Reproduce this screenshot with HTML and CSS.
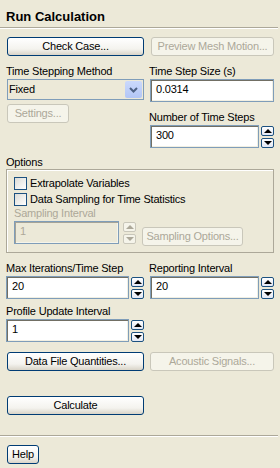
FILE: index.html
```html
<!DOCTYPE html>
<html lang="en">
<head>
  <meta charset="UTF-8" />
  <title>Run Calculation</title>
  <link rel="stylesheet" href="styles.css">
</head>
<body>
<div class="panel">

  <div class="title">Run Calculation</div>

  <div class="pair row-top">
    <div class="col-left"><button class="btn wide">Check Case...</button></div>
    <div class="col-right"><button class="btn wide" disabled>Preview Mesh Motion...</button></div>
  </div>

  <!-- time stepping -->
  <div class="pair row-time">
    <div class="col-left">
      <div class="label">Time Stepping Method</div>
      <div class="combo">
        <span class="combo-text">Fixed</span>
        <span class="combo-arrow">
          <svg width="9" height="6" viewBox="0 0 9 6"><polyline points="1,1 4.5,4.5 8,1" fill="none" stroke="#4d6185" stroke-width="2"/></svg>
        </span>
      </div>
      <button class="btn settings" disabled>Settings...</button>
    </div>
    <div class="col-right">
      <div class="label">Time Step Size (s)</div>
      <div class="entry">0.0314</div>
      <div class="label label-next">Number of Time Steps</div>
      <div class="spin-field">
        <div class="entry">300</div>
        <div class="spinner"><span class="spin-btn up"></span><span class="spin-btn down"></span></div>
      </div>
    </div>
  </div>

  <!-- options -->
  <div class="label options-label">Options</div>
  <div class="group">
    <div class="check-row"><span class="checkbox"></span>Extrapolate Variables</div>
    <div class="check-row"><span class="checkbox"></span>Data Sampling for Time Statistics</div>
    <div class="sampling">
      <div class="sampling-field">
        <div class="label off">Sampling Interval</div>
        <div class="spin-field">
          <div class="entry off">1</div>
          <div class="spinner off"><span class="spin-btn up"></span><span class="spin-btn down"></span></div>
        </div>
      </div>
      <button class="btn sampling-btn" disabled>Sampling Options...</button>
    </div>
  </div>

  <div class="pair row-iter">
    <div class="col-left">
      <div class="label">Max Iterations/Time Step</div>
      <div class="spin-field">
        <div class="entry">20</div>
        <div class="spinner"><span class="spin-btn up"></span><span class="spin-btn down"></span></div>
      </div>
    </div>
    <div class="col-right">
      <div class="label">Reporting Interval</div>
      <div class="spin-field">
        <div class="entry">20</div>
        <div class="spinner"><span class="spin-btn up"></span><span class="spin-btn down"></span></div>
      </div>
    </div>
  </div>

  <div class="pair row-profile">
    <div class="col-left">
      <div class="label">Profile Update Interval</div>
      <div class="spin-field">
        <div class="entry">1</div>
        <div class="spinner"><span class="spin-btn up"></span><span class="spin-btn down"></span></div>
      </div>
    </div>
  </div>

  <div class="pair row-data">
    <div class="col-left"><button class="btn wide">Data File Quantities...</button></div>
    <div class="col-right"><button class="btn full" disabled>Acoustic Signals...</button></div>
  </div>

  <div class="pair row-calc">
    <div class="col-left"><button class="btn wide">Calculate</button></div>
  </div>

  <div class="sep"></div>

  <button class="btn help">Help</button>

</div>
</body>
</html>
```

FILE: styles.css
```css
body {
  margin: 0;
  width: 280px;
  background-color: #ece9d8;
  font-family: 'Liberation Sans', Arial, sans-serif;
  font-size: 11px;
  letter-spacing: -0.2px;
  color: #000;
}

.panel {
  padding: 0 6px;
}

.title {
  margin: 0 -4px 0 -6px;
  padding: 9px 6px 2px;
  font-size: 13px;
  font-weight: bold;
  line-height: 16px;
  letter-spacing: 0;
  border-bottom: 1px solid #aca899;
  box-shadow: 0 1px 0 #fff;
}

/* two columns */
.pair {
  display: grid;
  grid-template-columns: 138px 124px;
  column-gap: 6px;
  align-items: start;
}

.row-top { margin-top: 9px; }
.row-time { margin-top: 9px; }
.row-iter { margin-top: 9px; }
.row-profile { margin-top: 6px; }
.row-data { margin-top: 10px; }
.row-calc { margin-top: 25px; }

.label {
  height: 13px;
  line-height: 13px;
  white-space: nowrap;
}

.col-right .label {
  margin-left: -1px;
}

.label.off {
  color: #aca899;
}

.label + .entry,
.label + .combo,
.label + .spin-field {
  margin-top: 1px;
}

.label-next {
  margin-top: 9px;
}

/* buttons */
.btn {
  display: block;
  box-sizing: border-box;
  height: 19px;
  padding: 0;
  font: inherit;
  letter-spacing: inherit;
  line-height: 17px;
  color: #000;
  text-align: center;
  white-space: nowrap;
  border: 1px solid #003c74;
  border-radius: 3px;
  background: linear-gradient(#ffffff, #f4f3ee 65%, #d9d4c8);
}

.btn:disabled {
  color: #aca899;
  border-color: #c9c7ba;
  background: #f5f4ea;
}

.wide {
  margin-left: 1px;
  width: calc(100% - 1px);
}

.full {
  width: 100%;
}

.settings {
  margin: 4px 0 0 1px;
  width: 62px;
}

.help {
  margin: 8px 0 0 1px;
  width: 32px;
}

/* combo box */
.combo {
  display: flex;
  box-sizing: border-box;
  margin-left: 1px;
  width: 137px;
  height: 21px;
  border: 1px solid #7f9db9;
  background: #ece9d8;
}

.combo-text {
  flex: 1;
  padding-left: 1px;
  line-height: 19px;
}

.combo-arrow {
  display: flex;
  align-items: center;
  justify-content: center;
  width: 17px;
  margin: 1px;
  border-radius: 2px;
  background: linear-gradient(#cbd9fc, #b2c6f6);
}

/* entries */
.entry {
  box-sizing: border-box;
  height: 23px;
  padding-left: 5px;
  line-height: 19px;
  border: 1px solid #7f9db9;
  background: #fff;
  box-shadow: inset 1px 1px 0 #716f64, inset -1px -1px 0 #f1efe2;
}

.entry.off {
  color: #aca899;
  background: #ece9d8;
  box-shadow: inset 1px 1px 0 #a5a397, inset -1px -1px 0 #f5f4ea;
}

.spin-field {
  display: flex;
  align-items: center;
  gap: 2px;
}

.spin-field .entry {
  flex: 1;
}

.spinner {
  display: flex;
  flex-direction: column;
  gap: 2px;
}

.spin-btn {
  display: flex;
  align-items: center;
  justify-content: center;
  box-sizing: border-box;
  width: 13px;
  height: 10px;
  border: 1px solid #1c5180;
  border-radius: 2px;
  background: linear-gradient(#ffffff, #e3e8f4);
}

.spin-btn::after {
  content: "";
  width: 0;
  height: 0;
  border-left: 4px solid transparent;
  border-right: 4px solid transparent;
}

.up::after { border-bottom: 4px solid #000; }
.down::after { border-top: 4px solid #000; }

.spinner.off .spin-btn {
  border-color: #c9c7ba;
  background: #f5f4ea;
}

.spinner.off .up::after { border-bottom-color: #aca899; }
.spinner.off .down::after { border-top-color: #aca899; }

/* options group */
.options-label {
  margin-top: 8px;
}

.group {
  padding: 7px 7px 8px;
  border: 1px solid #aca899;
  box-shadow: inset 1px 1px 0 #fff;
}

.check-row {
  display: flex;
  align-items: center;
  gap: 3px;
  height: 13px;
  line-height: 13px;
  white-space: nowrap;
}

.check-row + .check-row {
  margin-top: 3px;
}

.checkbox {
  box-sizing: border-box;
  width: 13px;
  height: 13px;
  border: 1px solid #1c5180;
  background: linear-gradient(135deg, #dcdcd7, #ffffff);
}

.sampling {
  display: flex;
  align-items: flex-end;
  margin-top: 1px;
}

.sampling-field {
  width: 122px;
}

.sampling-field .spin-field {
  gap: 4px;
}

.sampling-btn {
  margin: 0 0 -2px 6px;
  width: 101px;
}

.sep {
  margin: 20px -4px 0 -6px;
  border-top: 1px solid #aca899;
  border-bottom: 1px solid #fff;
}
```
